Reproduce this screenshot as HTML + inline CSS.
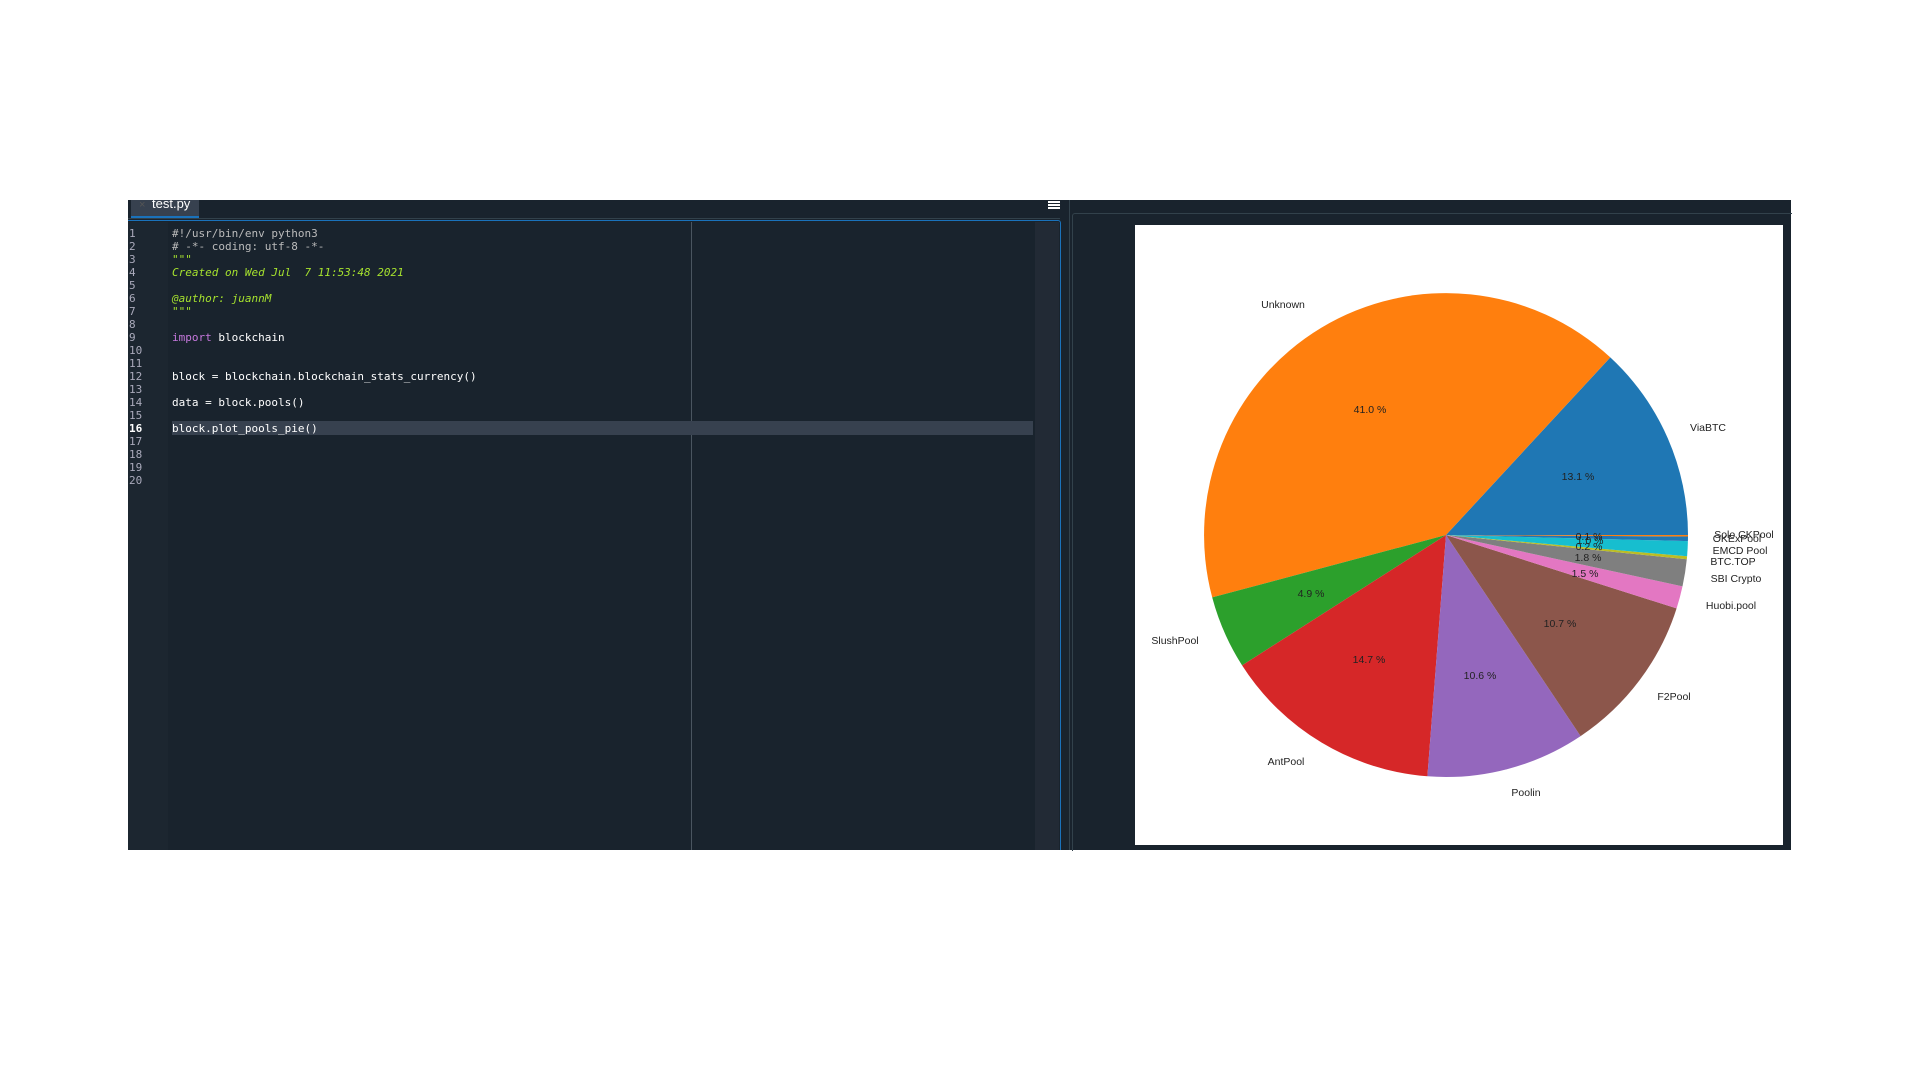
<!DOCTYPE html>
<html><head><meta charset="utf-8"><style>
body{margin:0;width:1920px;height:1080px;background:#fff;position:relative;overflow:hidden;font-family:"Liberation Sans",sans-serif}
.a{position:absolute}
.code{font-family:"DejaVu Sans Mono","Liberation Mono",monospace;font-size:11px;line-height:13px;white-space:pre;color:#fff}
</style></head><body>
<div class="a" style="left:128px;top:200px;width:1663px;height:650px;background:#19232d"></div>
<!-- tab bar -->
<div class="a" style="left:131px;top:200px;width:68px;height:16px;background:#37414f;border-bottom:3px solid #1a72bb"></div>
<div class="a" style="left:152px;top:196px;color:#fff;font-size:13px">test.py</div>
<div class="a" style="left:139px;top:199px;color:#555;font-size:11px">×</div>
<div class="a" style="left:128px;top:218px;width:932px;height:1px;background:#32414b"></div>
<!-- hamburger -->
<div class="a" style="left:1048px;top:201px;width:12px;height:2px;background:#fff"></div>
<div class="a" style="left:1048px;top:204px;width:12px;height:2px;background:#fff"></div>
<div class="a" style="left:1048px;top:207px;width:12px;height:2px;background:#fff"></div>
<!-- editor border -->
<div class="a" style="left:128px;top:220px;width:933px;height:630px;border-top:1.5px solid #1a72bb;border-right:1.5px solid #1a72bb;border-radius:0 3px 0 0;box-sizing:border-box"></div>
<div class="a" style="left:128px;top:222px;width:40px;height:628px;background:#1c2630"></div>
<div class="a" style="left:1035px;top:222px;width:24px;height:628px;background:#222a35"></div>
<div class="a" style="left:691px;top:222px;width:1px;height:628px;background:#4a5560"></div>
<div class="a" style="left:172px;top:421px;width:861px;height:14px;background:#37414f"></div>
<div class="a" style="left:1069px;top:200px;width:1px;height:650px;background:#32414b"></div>
<div class="a" style="left:1072px;top:213px;width:719px;height:637px;border-top:1px solid #32414b;border-left:1px solid #32414b;border-radius:3px 0 0 0"></div>
<!-- line numbers -->
<div class="a code" style="left:129px;top:226.5px;color:#aab">1
2
3
4
5
6
7
8
9
10
11
12
13
14
15
<b style="color:#fff">16</b>
17
18
19
20</div>
<div class="a code" style="left:172px;top:226.5px"><span style="color:#bbb">#!/usr/bin/env python3
# -*- coding: utf-8 -*-
<span style="color:#a6e22e">"""</span></span>
<i style="color:#a6e22e">Created on Wed Jul  7 11:53:48 2021</i>

<i style="color:#a6e22e">@author: juannM</i>
<span style="color:#a6e22e">"""</span>

<span style="color:#c678dd">import</span> blockchain


block = blockchain.blockchain_stats_currency()

data = block.pools()

block.plot_pools_pie()</div>
<!-- plot -->
<div class="a" style="left:1135px;top:225px;width:648px;height:620px;background:#fff"></div>
<svg class="a" style="left:0;top:0" width="1920" height="1080" font-family="Liberation Sans,sans-serif" font-size="10.5">
<g stroke="none">
<path d="M1446 535 L1688 535 A242 242 0 0 0 1610.3 357.4Z" fill="#1f77b4"/>
<path d="M1446 535 L1610.3 357.4 A242 242 0 0 0 1212.2 597.4Z" fill="#ff7f0e"/>
<path d="M1446 535 L1212.2 597.4 A242 242 0 0 0 1242.1 665.4Z" fill="#2ca02c"/>
<path d="M1446 535 L1242.1 665.4 A242 242 0 0 0 1427.4 776.3Z" fill="#d62728"/>
<path d="M1446 535 L1427.4 776.3 A242 242 0 0 0 1580.6 736.1Z" fill="#9467bd"/>
<path d="M1446 535 L1580.6 736.1 A242 242 0 0 0 1676.6 608.4Z" fill="#8c564b"/>
<path d="M1446 535 L1676.6 608.4 A242 242 0 0 0 1682.5 586.4Z" fill="#e377c2"/>
<path d="M1446 535 L1682.5 586.4 A242 242 0 0 0 1686.8 559.3Z" fill="#7f7f7f"/>
<path d="M1446 535 L1686.8 559.3 A242 242 0 0 0 1687.1 556.3Z" fill="#bcbd22"/>
<path d="M1446 535 L1687.1 556.3 A242 242 0 0 0 1687.9 541.1Z" fill="#17becf"/>
<path d="M1446 535 L1687.9 541.1 A242 242 0 0 0 1688 536.5Z" fill="#1f77b4"/>
<path d="M1446 535 L1688 536.5 L1688 535Z" fill="#ff7f0e"/>
</g>
<g fill="#222" text-anchor="middle" dominant-baseline="middle">
<text x="1283" y="305">Unknown</text>
<text x="1708" y="428">ViaBTC</text>
<text x="1175" y="641">SlushPool</text>
<text x="1286" y="762">AntPool</text>
<text x="1526" y="793">Poolin</text>
<text x="1674" y="697">F2Pool</text>
<text x="1731" y="606">Huobi.pool</text>
<text x="1736" y="579">SBI Crypto</text>
<text x="1733" y="562">BTC.TOP</text>
<text x="1740" y="551">EMCD Pool</text>
<text x="1737" y="539">OKExPool</text>
<text x="1744" y="535">Solo CKPool</text>
<text x="1370" y="410">41.0 %</text>
<text x="1578" y="477">13.1 %</text>
<text x="1311" y="594">4.9 %</text>
<text x="1369" y="660">14.7 %</text>
<text x="1480" y="676">10.6 %</text>
<text x="1560" y="624">10.7 %</text>
<text x="1585" y="574">1.5 %</text>
<text x="1588" y="558">1.8 %</text>
<text x="1589" y="547">0.2 %</text>
<text x="1590" y="541">1.0 %</text>
<text x="1589" y="537">0.1 %</text>
</g>
</svg>
</body></html>
